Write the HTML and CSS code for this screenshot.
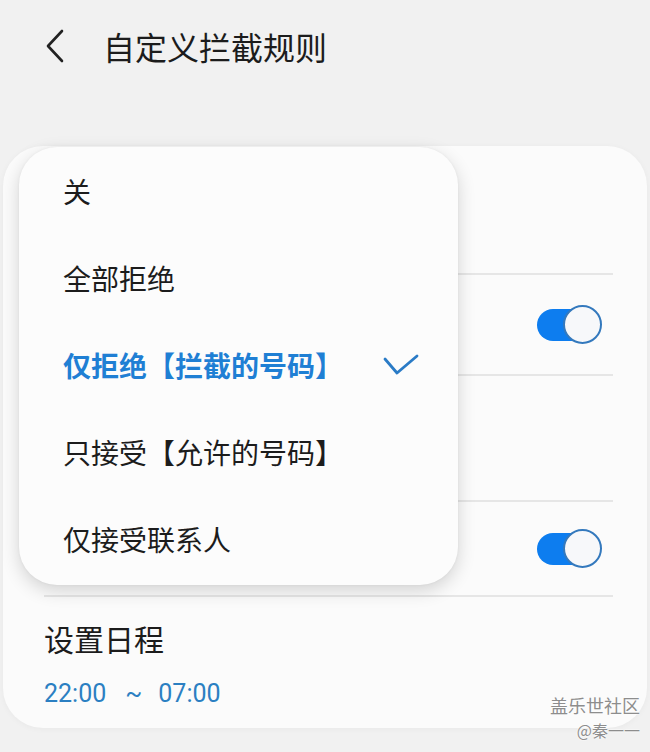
FILE: index.html
```html
<!DOCTYPE html>
<html lang="zh-CN">
<head>
  <meta charset="UTF-8">
  <title>自定义拦截规则</title>
  <link rel="stylesheet" href="styles.css">
</head>
<body>
  <div class="header">
    <svg class="back" width="22" height="36" viewBox="0 0 22 36">
      <polyline points="18,3 4,18 18,33" fill="none" stroke="#222" stroke-width="2.6" stroke-linecap="round" stroke-linejoin="round"/>
    </svg>
    <h1>自定义拦截规则</h1>
  </div>

  <div class="card">
    <div class="row row-first"></div>
    <div class="row row-toggle row-a">
      <span class="switch"><span class="knob"></span></span>
    </div>
    <div class="row row-b"></div>
    <div class="row row-toggle row-c">
      <span class="switch"><span class="knob"></span></span>
    </div>
    <div class="row row-schedule">
      <div class="schedule-title">设置日程</div>
      <div class="schedule-time">
        <span>22:00</span><span class="tilde">~</span><span>07:00</span>
      </div>
    </div>

    <!-- 下拉菜单 -->
    <div class="menu">
      <div class="menu-item">关</div>
      <div class="menu-item">全部拒绝</div>
      <div class="menu-item selected">
        <span>仅拒绝【拦截的号码】</span>
        <svg width="38" height="24" viewBox="0 0 38 24">
          <polyline points="3,6 15,20 35,3" fill="none" stroke="#2a7bc6" stroke-width="2.8" stroke-linecap="round" stroke-linejoin="round"/>
        </svg>
      </div>
      <div class="menu-item">只接受【允许的号码】</div>
      <div class="menu-item">仅接受联系人</div>
    </div>
  </div>

  <div class="watermark">
    <div class="wm-main">盖乐世社区</div>
    <div class="wm-sub">@秦一一</div>
  </div>
</body>
</html>
```

FILE: styles.css
```css
body {
  margin: 0;
  background: #f1f1f1;
  font-family: "Noto Sans CJK SC", "Noto Sans", sans-serif;
  color: #1c1c1c;
  width: 650px;
  height: 752px;
  overflow: hidden;
  position: relative;
}

.header {
  height: 92px;
  display: flex;
  align-items: center;
  padding-left: 44px;
}

.back {
  margin-right: 37px;
}

h1 {
  margin: 0;
  font-size: 32px;
  font-weight: 400;
  line-height: 40px;
}

.card {
  position: relative;
  margin: 54px 3px 0 3px;
  background: #fbfbfb;
  border-radius: 40px;
  box-shadow: 0 1px 6px rgba(0, 0, 0, 0.04);
  padding: 0 34px 0 41px;
}

.row {
  border-top: 2px solid #e6e6e6;
}

.row-first {
  border-top: none;
  height: 127px;
}

.row-a {
  height: 99px;
}

.row-b {
  height: 124px;
}

.row-c {
  height: 93px;
}

.row-toggle {
  display: flex;
  align-items: center;
  justify-content: flex-end;
  padding-right: 12px;
}

.switch {
  position: relative;
  width: 64px;
  height: 32px;
  background: #0d7def;
  border-radius: 16px;
  display: flex;
  align-items: center;
  justify-content: flex-end;
}

.knob {
  width: 35px;
  height: 35px;
  margin-right: -1px;
  border-radius: 50%;
  background: #f7f8fa;
  border: 2px solid #3479bd;
}

.row-schedule {
  padding: 21px 0 18px;
}

.schedule-title {
  font-size: 30px;
  line-height: 40px;
}

.schedule-time {
  margin-top: 20px;
  font-family: Roboto, "Noto Sans", sans-serif;
  font-size: 25px;
  line-height: 32px;
  color: #2b7fc2;
}

.tilde {
  margin: 0 16px 0 19px;
}

.menu {
  position: absolute;
  top: 1px;
  left: 16px;
  width: 439px;
  height: 438px;
  background: #fcfcfc;
  border-radius: 38px;
  box-shadow: 0 6px 18px rgba(0, 0, 0, 0.16), 0 0 3px rgba(0, 0, 0, 0.05);
}

.menu-item {
  height: 88px;
  display: flex;
  align-items: center;
  justify-content: space-between;
  padding: 0 38px 0 44px;
  font-size: 28px;
  margin-top: -1px;
}

.menu-item:first-child {
  margin-top: 0;
}

.menu-item.selected {
  color: #1f7fd4;
  font-weight: 700;
}

.watermark {
  position: absolute;
  right: 10px;
  top: 693px;
  text-align: right;
  color: #8d8d8d;
  text-shadow: 0 0 2px #fff, 0 0 2px #fff;
}

.wm-main {
  font-size: 18px;
  line-height: 24px;
}

.wm-sub {
  font-size: 16px;
  line-height: 22px;
  margin-top: 2px;
}
```
